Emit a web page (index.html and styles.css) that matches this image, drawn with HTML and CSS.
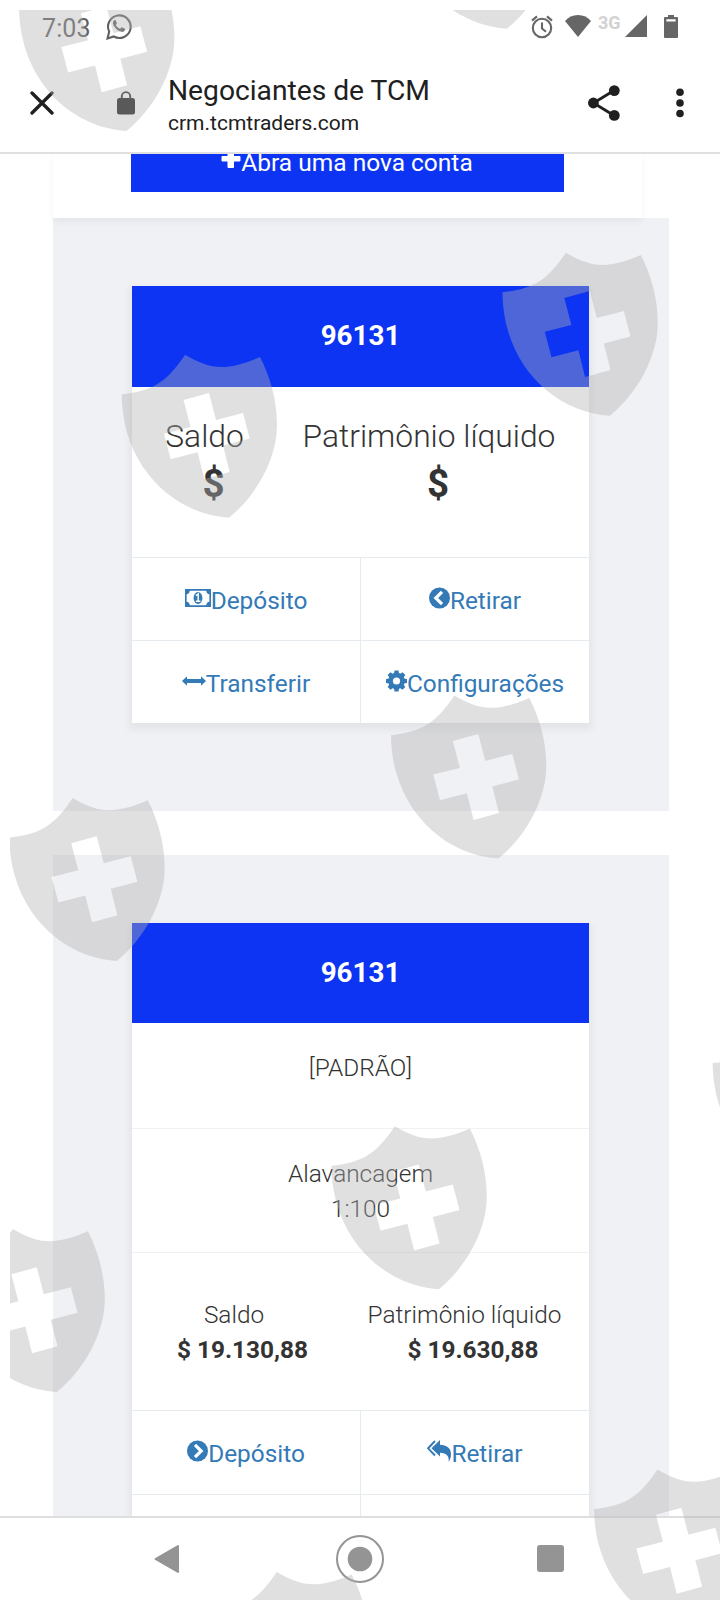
FILE: index.html
```html
<!DOCTYPE html>
<html lang="pt">
<head>
<meta charset="utf-8">
<title>Negociantes de TCM</title>
<link rel="stylesheet" href="styles.css">
</head>
<body>
<div class="screen">
  <header class="header">
    <div class="status">
      <span class="time">7:03</span>
      <svg class="wa" width="26" height="27" viewBox="0 0 26 27" fill="none" stroke="#606060"><path d="M1.500 25.500 3.200 18.600A11.300 11.300 0 1 1 7.800 23.500Z" stroke-width="2.100"/><path d="M8.100 7.200c-1.900 1.800-1.300 4.400.6 6.900 2.300 3.100 5.700 5.300 8.300 4.600 2.200-.7 2.300-2.500 1.900-2.900l-3.100-1.500c-.7-.1-1.100 1.700-1.900 1.500-1.800-.6-3.800-2.700-4.100-3.700-.1-.7 1.200-1 1.100-1.900l-1.200-2.800c-.3-.6-1.100-.6-1.600-.2Z" fill="#606060" stroke="none"/></svg>
      <span class="grow"></span>
      <svg class="alarm" width="22" height="24" viewBox="0 0 22 24" fill="none" stroke="#666" stroke-width="2.100"><circle cx="11" cy="13" r="9.200"/><path d="M11 7.500v6l4 3.300M1 5.600 6 1.400M21 5.600 16 1.400"/></svg>
      <svg class="wifi" width="26" height="22" viewBox="0 0 26 22"><path d="M0 6Q5 0 13 0T26 6L13 22Z" fill="#666"/></svg>
      <span class="net">3G</span>
      <svg class="signal" width="22" height="22" viewBox="0 0 22 22"><path d="M22 0V22H0Z" fill="#666"/></svg>
      <svg class="battery" width="14" height="23" viewBox="0 0 14 23"><path fill-rule="evenodd" d="M4 0h6v2h3a1 1 0 0 1 1 1v19a1 1 0 0 1-1 1H1a1 1 0 0 1-1-1V3a1 1 0 0 1 1-1h3ZM2.400 4.300v2.200h9.200V4.300Z" fill="#666"/></svg>
    </div>
    <div class="toolbar">
      <svg class="close" width="24" height="24" viewBox="0 0 24 24"><path d="M2 2 22 22M22 2 2 22" stroke="#202020" stroke-width="3.300" stroke-linecap="round"/></svg>
      <svg class="lock" width="18" height="24" viewBox="0 0 18 24"><rect y="7" width="18" height="16.500" rx="2.500" fill="#1e1e1e"/><path d="M4.800 8V5.300a4.200 4.200 0 0 1 8.400 0V8" fill="none" stroke="#303030" stroke-width="1.900"/></svg>
      <div class="titles"><div class="title">Negociantes de TCM</div><div class="url">crm.tcmtraders.com</div></div>
      <span class="grow"></span>
      <svg class="share" width="32" height="36" viewBox="0 0 32 36" fill="#202020"><path d="M26 5.500 5.500 18 26 30.500" fill="none" stroke="#202020" stroke-width="2.800"/><circle cx="26.300" cy="5.600" r="5.400"/><circle cx="5.400" cy="18" r="5.400"/><circle cx="26.300" cy="30.400" r="5.400"/></svg>
      <svg class="more" width="8" height="30" viewBox="0 0 8 30" fill="#202020"><circle cx="4" cy="4.300" r="3.800"/><circle cx="4" cy="15" r="3.800"/><circle cx="4" cy="25.500" r="3.800"/></svg>
    </div>
  </header>

  <main class="content">
    <section class="top-card">
      <div class="new-account"><svg class="plus" width="20" height="20" viewBox="0 0 20 20"><path d="M7 1h5.500v6.500H19v4.500h-6.500V18.500H7V12H1V7.500H7Z" fill="#fff" stroke="#fff" stroke-linejoin="round"/></svg><span>Abra uma nova conta</span></div>
    </section>
    <section class="panel first">
      <div class="card">
        <div class="head">96131</div>
        <div class="balances big">
          <div><div class="label">Saldo</div><div class="value">$</div></div>
          <div><div class="label">Patrimônio líquido</div><div class="value">$</div></div>
        </div>
        <div class="actions">
          <a class="cell"><svg width="26" height="18" viewBox="0 0 27 18" preserveAspectRatio="none"><path fill-rule="evenodd" d="M0 0H27V18H0ZM5 1.700Q4.500 4.800 1.700 5.200V12.800Q4.500 13.200 5 16.300H22Q22.500 13.200 25.300 12.800V5.200Q22.500 4.800 22 1.700Z" fill="#337ab7"/><ellipse cx="13.500" cy="9" rx="4.600" ry="6" fill="#337ab7"/><path d="M11.300 6.600 13.700 5V12M11.300 12.300H16" fill="none" stroke="#fff" stroke-width="1.500"/></svg><span>Depósito</span></a>
          <a class="cell"><svg width="21" height="22" viewBox="0 0 21 22"><circle cx="10.500" cy="11" r="10.500" fill="#337ab7"/><path d="M13 4.800 6.800 11l6.200 6.200" fill="none" stroke="#fff" stroke-width="3.200"/></svg><span>Retirar</span></a>
          <a class="cell"><svg width="24" height="10" viewBox="0 0 24 10"><path d="M0 5 5 .3V3H19V.3L24 5 19 9.700V7H5V9.700Z" fill="#337ab7"/></svg><span>Transferir</span></a>
          <a class="cell"><svg width="21" height="22" viewBox="-10.500 -11 21 22"><g fill="#337ab7"><path id="teeth" d="M-2.600-7-2-10.500H2L2.600-7V7L2 10.500H-2L-2.600 7Z"/><use href="#teeth" transform="rotate(45)"/><use href="#teeth" transform="rotate(90)"/><use href="#teeth" transform="rotate(135)"/><circle r="8.300"/></g><circle r="3.600" fill="#fff"/></svg><span>Configurações</span></a>
        </div>
      </div>
    </section>
    <section class="panel second">
      <div class="card">
        <div class="head">96131</div>
        <div class="info kind">[PADRÃO]</div>
        <div class="info leverage"><div>Alavancagem</div><div>1:100</div></div>
        <div class="balances small">
          <div><div class="label">Saldo</div><div class="value">$ 19.130,88</div></div>
          <div><div class="label">Patrimônio líquido</div><div class="value">$ 19.630,88</div></div>
        </div>
        <div class="actions">
          <a class="cell"><svg width="21" height="22" viewBox="0 0 21 22"><circle cx="10.500" cy="11" r="10.500" fill="#337ab7"/><path d="M8 4.800 14.200 11 8 17.200" fill="none" stroke="#fff" stroke-width="3.200"/></svg><span>Depósito</span></a>
          <a class="cell"><svg width="24" height="22" viewBox="0.500 0 24 22"><path d="M8.500 1 1.600 8.300 8.500 15.500" fill="none" stroke="#337ab7" stroke-width="1.900"/><path d="M5 8.200 13.500 0V4.700C20 5 24.500 8 24.500 14c0 3-.8 5.500-2.200 8 .3-6-2-9-8.800-9.300v3.800Z" fill="#337ab7"/></svg><span>Retirar</span></a>
          <a class="cell"></a>
          <a class="cell"></a>
        </div>
      </div>
    </section>
  </main>

  <nav class="navbar">
    <svg class="back" width="26" height="30" viewBox="0 0 26 30"><path d="M1.500 15 24 2V28Z" fill="#949494" stroke="#949494" stroke-width="2" stroke-linejoin="round"/></svg>
    <svg class="home" width="50" height="50" viewBox="0 0 50 50"><circle cx="25" cy="25" r="23" fill="#fff" stroke="#949494" stroke-width="2"/><circle cx="25" cy="25" r="12.300" fill="#949494"/></svg>
    <span class="recent"></span>
  </nav>

  <svg class="shields" width="720" height="1600" viewBox="0 0 720 1600">
    <defs>
      <clipPath id="frame"><rect x="10" y="10" width="710" height="1590"/></clipPath>
      <path id="shield" fill-rule="evenodd" d="M121.700 394.300C150 391 165 385 185 354.700C210 369 225 372 260 357C270 376 277 400 277 425C277 460 255 497 229 517.700C172 514 122 465 121.700 394.300ZM183.500 400 209 393 216 420 243 413 249.700 438.500 223 445.500 229.700 472 204.300 479 197.600 452.300 170.700 459.300 164 433.700 190.600 427Z"/>
    </defs>
    <g clip-path="url(#frame)" fill="#b2b2b2" fill-opacity=".4">
      <use href="#shield" x="-102.600" y="-386.700"/>
      <use href="#shield" x="277.900" y="-489"/>
      <use href="#shield" x="380.800" y="-102"/>
      <use href="#shield"/>
      <use href="#shield" x="269.300" y="340.900"/>
      <use href="#shield" x="-112.300" y="443.300"/>
      <use href="#shield" x="209.800" y="771.500"/>
      <use href="#shield" x="-172.200" y="874.300"/>
      <use href="#shield" x="591" y="668.800"/>
      <use href="#shield" x="472.400" y="1114.800"/>
      <use href="#shield" x="91.700" y="1217.400"/>
    </g>
  </svg>
</div>
</body>
</html>
```
FILE: styles.css
```css
* { box-sizing: border-box; }
body { margin: 0; font-family: Roboto, "Liberation Sans", sans-serif; color: #333; background: #fff; }
svg { display: block; flex: none; }
.screen { position: relative; width: 720px; height: 1600px; overflow: hidden; display: flex; flex-direction: column; }
.grow { flex: 1; }

.header { height: 154px; flex: none; background: #fff; border-bottom: 2px solid #e0e0e0; }
.status { display: flex; align-items: center; height: 54px; padding-left: 42px; padding-right: 42px; color: #606060; }
.time { width: 64px; font-size: 25px; line-height: 30px; letter-spacing: .1px; padding-top: 3px; }
.wa { margin-bottom: 1px; }
.alarm { margin-right: 12px; }
.wifi { margin-right: 7px; margin-bottom: 2px; }
.net { width: 27px; font-size: 18px; font-weight: 700; line-height: 20px; color: #d2d2d2; margin-bottom: 9px; }
.signal { margin-right: 17px; margin-bottom: 2px; }
.battery { margin-bottom: 1px; }
.toolbar { display: flex; align-items: center; height: 98px; padding-left: 30px; padding-right: 36px; color: #202020; }
.lock { margin-left: 63px; }
.titles { margin-left: 33px; padding-top: 3px; white-space: nowrap; }
.title { font-size: 28.2px; line-height: 36px; }
.url { font-size: 21px; line-height: 28px; }
.share { margin-right: 56px; }

.content { flex: 1; min-height: 0; overflow: hidden; padding-left: 53px; }
.top-card { position: relative; width: 589px; height: 64px; padding-left: 78px; background: #fff; box-shadow: 0 4px 8px rgba(0,0,0,.05); }
.new-account { display: flex; justify-content: center; width: 433px; height: 38px; padding-right: 1px; background: #0c34f2; color: #fff; font-size: 24.5px; line-height: 18px; }
.plus { margin-top: -5px; }
.panel { width: 616px; background: #f0f1f5; padding: 68px 80px 0 79px; }
.first { height: 593px; margin-bottom: 44px; }
.second { height: 800px; }
.card { background: #fff; box-shadow: 0 4px 7px 3px rgba(0,0,0,.05); }
.head { height: 101px; line-height: 100px; background: #0c34f2; color: #fff; text-align: center; font-size: 27.8px; font-weight: 700; }
.second .head { height: 100px; }

.balances { display: grid; text-align: center; }
.label { font-weight: 300; white-space: nowrap; }
.value { font-weight: 700; }
.big { height: 170px; padding: 25px 8px 0 0; grid-template-columns: 145px 1fr; }
.big .label { font-size: 31.8px; line-height: 48px; }
.big .value { font-size: 38.5px; line-height: 48px; padding-left: 18px; }
.small { height: 157px; padding: 44px 0 0; grid-template-columns: 204px 1fr; font-size: 24.4px; line-height: 35px; }
.small .label { padding-left: 0; }
.small .value { padding-left: 17px; }
.small > :last-child { padding-left: 4px; }
.info { border-bottom: 1px solid #f1f1f1; text-align: center; font-size: 24.4px; font-weight: 300; line-height: 35px; }
.kind { height: 106px; padding-top: 27px; }
.leverage { height: 124px; padding-top: 27px; }

.actions { display: grid; grid-template-columns: 229px 228px; }
.cell { display: flex; justify-content: center; align-items: center; height: 83px; padding-top: 3px; border-top: 1px solid #e6ebf0; color: #337ab7; font-size: 24.4px; line-height: 36px; }
.cell:nth-child(odd) { border-right: 1px solid #e6ebf0; }
.cell svg { margin-bottom: 6px; }
.second .cell { height: 84px; }

.navbar { display: flex; align-items: center; flex: none; height: 84px; border-top: 2px solid #dedede; background: #fff; padding: 0 0 1px 154px; }
.home { margin-left: 155px; }
.recent { width: 27px; height: 27px; margin-left: 152px; border-radius: 3px; background: #949494; }

.shields { position: absolute; left: 0; top: 0; pointer-events: none; }
```
